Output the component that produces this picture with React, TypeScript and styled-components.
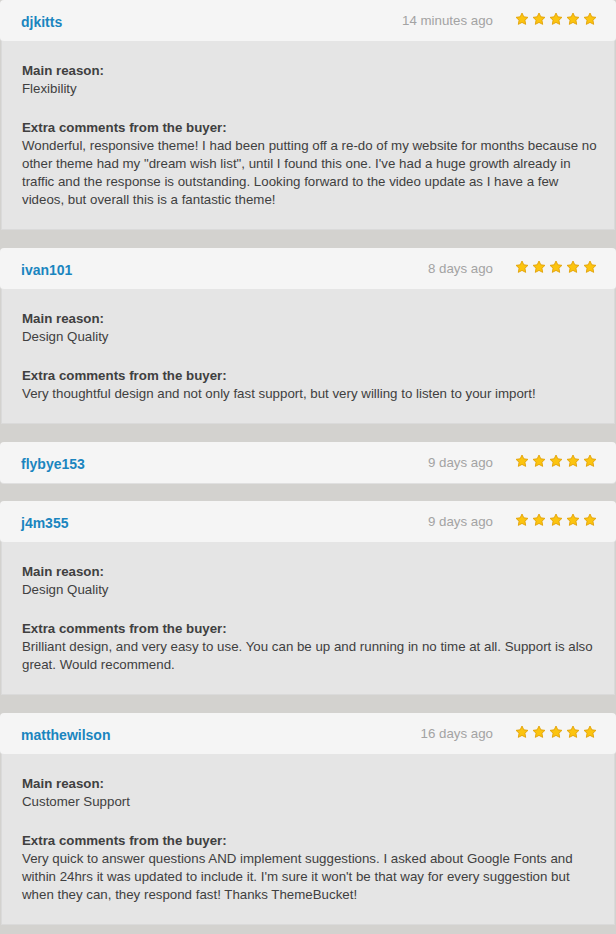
import React from "react";
import styled, { createGlobalStyle } from "styled-components";

const Global = createGlobalStyle`
  html, body { margin: 0; padding: 0; background: #d3d2cf; }
  body { font-family: "Liberation Sans", Arial, Helvetica, sans-serif; }
`;

const List = styled.div`
  display: flex;
  flex-direction: column;
  gap: 18px;
  width: 616px;
`;

const Card = styled.div`
  display: flex;
  flex-direction: column;
`;

const Header = styled.div`
  height: 41px;
  box-sizing: border-box;
  display: flex;
  align-items: center;
  padding: 0 19px 0 21px;
  background: #f5f5f5;
  border-radius: 4px;
  box-shadow: 0 1px 0 #e0e0e0;
`;

const Name = styled.a`
  color: #1a85bf;
  font-weight: bold;
  font-size: 14px;
  text-decoration: none;
  flex: 1;
  padding-top: 2px;
`;

const Time = styled.span`
  color: #a3a3a3;
  font-size: 13.3px;
  margin-right: 22px;
`;

const Stars = styled.div`
  display: flex;
  gap: 3px;
  margin-top: -3px;
`;

const Body = styled.div`
  background: #e5e5e5;
  border: 1px solid #dadada;
  border-top: none;
  margin: 0 1px;
  padding: 21px 14px 20px 20px;
  font-size: 13.3px;
  line-height: 18px;
  color: #404040;
`;

const Section = styled.div`
  & + & {
    margin-top: 21px;
  }
`;

const Label = styled.div`
  font-weight: bold;
`;

const Star = () => (
  <svg width="14" height="14" viewBox="0 0 24 24">
    <path
      d="M12 1.8l3.1 6.5 7.1.9-5.2 4.9 1.3 7.1L12 17.8l-6.3 3.4 1.3-7.1L1.8 9.2l7.1-.9z"
      fill="#fcc40f"
      stroke="#e2a30a"
      strokeWidth="1.6"
      strokeLinejoin="round"
    />
  </svg>
);

type Review = {
  name: string;
  time: string;
  reason?: string;
  comment?: string;
};

const reviews: Review[] = [
  {
    name: "djkitts",
    time: "14 minutes ago",
    reason: "Flexibility",
    comment:
      'Wonderful, responsive theme! I had been putting off a re-do of my website for months because no other theme had my "dream wish list", until I found this one. I\'ve had a huge growth already in traffic and the response is outstanding. Looking forward to the video update as I have a few videos, but overall this is a fantastic theme!',
  },
  {
    name: "ivan101",
    time: "8 days ago",
    reason: "Design Quality",
    comment:
      "Very thoughtful design and not only fast support, but very willing to listen to your import!",
  },
  { name: "flybye153", time: "9 days ago" },
  {
    name: "j4m355",
    time: "9 days ago",
    reason: "Design Quality",
    comment:
      "Brilliant design, and very easy to use. You can be up and running in no time at all. Support is also great. Would recommend.",
  },
  {
    name: "matthewilson",
    time: "16 days ago",
    reason: "Customer Support",
    comment:
      "Very quick to answer questions AND implement suggestions. I asked about Google Fonts and within 24hrs it was updated to include it. I'm sure it won't be that way for every suggestion but when they can, they respond fast! Thanks ThemeBucket!",
  },
];

export default function App() {
  return (
    <>
      <Global />
      <List>
        {reviews.map((r) => (
          <Card key={r.name}>
            <Header>
              <Name href="#">{r.name}</Name>
              <Time>{r.time}</Time>
              <Stars>
                {[0, 1, 2, 3, 4].map((i) => (
                  <Star key={i} />
                ))}
              </Stars>
            </Header>
            {r.reason && (
              <Body>
                <Section>
                  <Label>Main reason:</Label>
                  <div>{r.reason}</div>
                </Section>
                <Section>
                  <Label>Extra comments from the buyer:</Label>
                  <div>{r.comment}</div>
                </Section>
              </Body>
            )}
          </Card>
        ))}
      </List>
    </>
  );
}
